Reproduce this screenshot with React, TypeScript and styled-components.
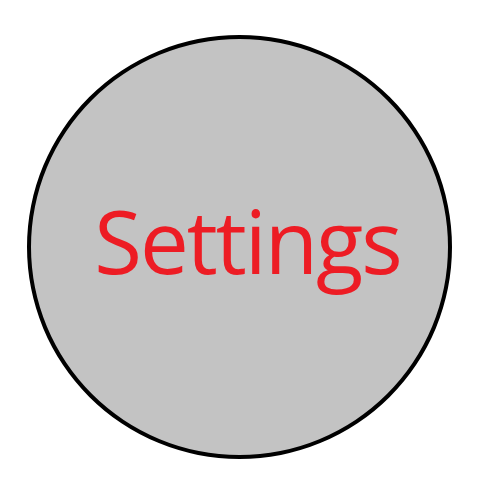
import { FC } from 'react'
import styled, { createGlobalStyle } from 'styled-components'

const GlobalStyle = createGlobalStyle`
  html, body {
    margin: 0;
    padding: 0;
    background: #ffffff;
  }
`

const StyledPage = styled.div`
  width: 500px;
  height: 500px;
  box-sizing: border-box;
  padding: 35px 0 0 27px;
  display: flex;
  align-items: flex-start;
  justify-content: flex-start;
`

const StyledCircle = styled.div`
  width: 425px;
  height: 424px;
  box-sizing: border-box;
  border: 4px solid #000000;
  border-radius: 50%;
  background-color: #c3c3c3;
  display: flex;
  align-items: center;
  justify-content: center;
  padding: 0 0 14px 16px;
`

const StyledLabel = styled.span`
  font-family: 'Open Sans', 'Noto Sans', sans-serif;
  font-size: 87px;
  line-height: 1;
  color: #ed1c24;
  letter-spacing: -2px;
`

const App: FC = () => {
  return (
    <>
      <GlobalStyle />
      <StyledPage>
        <StyledCircle>
          <StyledLabel>Settings</StyledLabel>
        </StyledCircle>
      </StyledPage>
    </>
  )
}

export default App
